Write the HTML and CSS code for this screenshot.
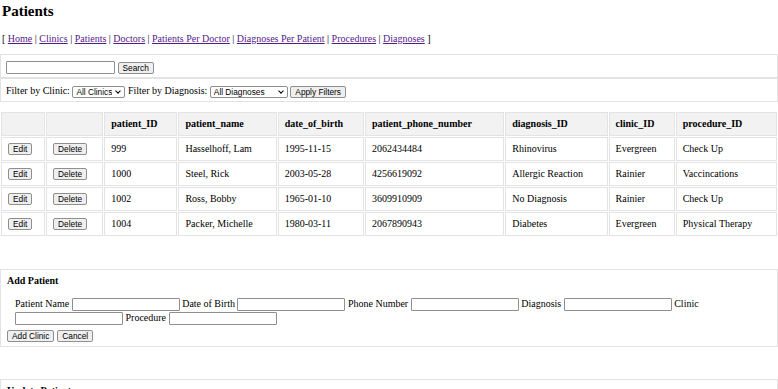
FILE: index.html
```html
<html>
<head>
	<link rel="stylesheet" href="styles.css">
</head>
<body>
	<h2 class="page-title">Patients</h2>
	<p class="nav">
		[ <a href="#">Home</a> | <a href="#">Clinics</a> | <a href="#">Patients</a> | <a href="#">Doctors</a> | <a href="#">Patients Per Doctor</a> | <a href="#">Diagnoses Per Patient</a> | <a href="#">Procedures</a> | <a href="#">Diagnoses</a> ]
	</p>

	<div class="bar">
		<input class="search-input" type="text"/>
		<button class="btn">Search</button>
	</div>
	<div class="bar">
		Filter by Clinic:
		<span class="pick-wrap">
			<select class="pick pick-clinic">
				<option>All Clinics</option>
			</select>
		</span>
		Filter by Diagnosis:
		<span class="pick-wrap">
			<select class="pick pick-diag">
				<option>All Diagnoses</option>
			</select>
		</span>
		<button class="btn">Apply Filters</button>
	</div>

	<table class="grid">
		<thead>
			<tr>
				<th class="c-edit"></th>
				<th class="c-del"></th>
				<th class="c-id">patient_ID</th>
				<th class="c-name">patient_name</th>
				<th class="c-dob">date_of_birth</th>
				<th class="c-phone">patient_phone_number</th>
				<th class="c-diag">diagnosis_ID</th>
				<th class="c-clinic">clinic_ID</th>
				<th class="c-proc">procedure_ID</th>
			</tr>
		</thead>
		<tbody>
			<tr>
				<td><button class="btn">Edit</button></td>
				<td><button class="btn">Delete</button></td>
				<td>999</td>
				<td>Hasselhoff, Lam</td>
				<td>1995-11-15</td>
				<td>2062434484</td>
				<td>Rhinovirus</td>
				<td>Evergreen</td>
				<td>Check Up</td>
			</tr>
			<tr>
				<td><button class="btn">Edit</button></td>
				<td><button class="btn">Delete</button></td>
				<td>1000</td>
				<td>Steel, Rick</td>
				<td>2003-05-28</td>
				<td>4256619092</td>
				<td>Allergic Reaction</td>
				<td>Rainier</td>
				<td>Vaccincations</td>
			</tr>
			<tr>
				<td><button class="btn">Edit</button></td>
				<td><button class="btn">Delete</button></td>
				<td>1002</td>
				<td>Ross, Bobby</td>
				<td>1965-01-10</td>
				<td>3609910909</td>
				<td>No Diagnosis</td>
				<td>Rainier</td>
				<td>Check Up</td>
			</tr>
			<tr>
				<td><button class="btn">Edit</button></td>
				<td><button class="btn">Delete</button></td>
				<td>1004</td>
				<td>Packer, Michelle</td>
				<td>1980-03-11</td>
				<td>2067890943</td>
				<td>Diabetes</td>
				<td>Evergreen</td>
				<td>Physical Therapy</td>
			</tr>
		</tbody>
	</table>

	<div class="panel">
		<h3 class="panel-title">Add Patient</h3>
		<div class="fields">
			<label>Patient Name <input class="field" type="text"/></label>
			<label>Date of Birth <input class="field" type="text"/></label>
			<label>Phone Number <input class="field" type="text"/></label>
			<label>Diagnosis <input class="field" type="text"/></label>
			<label>Clinic <input class="field" type="text"/></label>
			<label>Procedure <input class="field" type="text"/></label>
		</div>
		<div class="actions">
			<button class="btn">Add Clinic</button>
			<button class="btn">Cancel</button>
		</div>
	</div>

	<div class="panel">
		<h3 class="panel-title">Update Patient</h3>
		<div class="fields">
			<label>Patient Name <input class="field" type="text"/></label>
			<label>Date of Birth <input class="field" type="text"/></label>
			<label>Phone Number <input class="field" type="text"/></label>
			<label>Diagnosis <input class="field" type="text"/></label>
			<label>Clinic <input class="field" type="text"/></label>
			<label>Procedure <input class="field" type="text"/></label>
		</div>
		<div class="actions">
			<button class="btn">Update</button>
			<button class="btn">Cancel</button>
		</div>
	</div>
</body>
</html>
```

FILE: styles.css
```css
body{
	margin: 0;
	font-family: "Liberation Serif", serif;
	font-size: 10px;
	color: #000;
	background: #fff;
}

.page-title{
	font-size: 15px;
	line-height: 17px;
	margin: 3px 2px 0;
}

.nav{
	margin: 13px 2px 9px;
	line-height: 12px;
}
.nav a{
	color: #551a8b;
}

.bar{
	border: 1px solid #e3e3e3;
	padding: 5px 5px 4px;
	height: 13px;
	line-height: 13px;
}

.btn{
	font-family: "Liberation Sans", Arial, sans-serif;
	font-size: 8.3px;
	height: 12px;
	line-height: 10px;
	padding: 0 4px;
	margin: 0;
	border: 1px solid #8f8f8f;
	border-radius: 2px;
	background: #efefef;
	color: #000;
	vertical-align: middle;
}

.search-input{
	width: 109px;
	height: 13px;
	box-sizing: border-box;
	margin: 0;
	padding: 0;
	border: 1px solid #8f8f8f;
	border-radius: 1px;
	vertical-align: middle;
}

.pick-wrap{
	position: relative;
	display: inline-block;
	vertical-align: middle;
	line-height: 0;
}
.pick-wrap::after{
	content: "";
	position: absolute;
	right: 5px;
	top: 3px;
	width: 3px;
	height: 3px;
	border-right: 1.2px solid #000;
	border-bottom: 1.2px solid #000;
	transform: rotate(45deg);
	pointer-events: none;
}
.pick{
	-webkit-appearance: none;
	appearance: none;
	font-family: "Liberation Sans", Arial, sans-serif;
	font-size: 8.3px;
	height: 12px;
	line-height: 10px;
	box-sizing: border-box;
	margin: 0;
	padding: 0 12px 0 3px;
	border: 1px solid #8f8f8f;
	border-radius: 2px;
	background: #fff;
	color: #000;
}
.pick-clinic{
	width: 53px;
}
.pick-diag{
	width: 78px;
}

.grid{
	width: 100%;
	margin-top: 9px;
	table-layout: fixed;
	border-spacing: 1px;
	font-size: inherit;
}
.grid th, .grid td{
	box-sizing: border-box;
	border: 1px solid #e3e3e3;
	padding: 5px 6px;
	line-height: 12px;
	text-align: left;
	white-space: nowrap;
}
.grid th{
	background: #f2f2f2;
}
.c-edit{ width: 44px; }
.c-del{ width: 57px; }
.c-id{ width: 73px; }
.c-name{ width: 98px; }
.c-dob{ width: 86px; }
.c-phone{ width: 139px; }
.c-diag{ width: 102px; }
.c-clinic{ width: 66px; }
.c-proc{ width: 101px; }

.panel{
	border: 1px solid #e3e3e3;
	padding: 5px 6px 4px;
	margin-top: 32px;
}
.panel-title{
	font-size: 10px;
	line-height: 12px;
	margin: 0;
}

.fields{
	margin-top: 10px;
	padding-left: 8px;
	line-height: 14px;
}
.field{
	width: 108px;
	height: 13px;
	box-sizing: border-box;
	margin: 0;
	padding: 0;
	border: 1px solid #8f8f8f;
	border-radius: 1px;
	vertical-align: middle;
}

.actions{
	margin-top: 5px;
	display: flex;
	gap: 3px;
}
```
